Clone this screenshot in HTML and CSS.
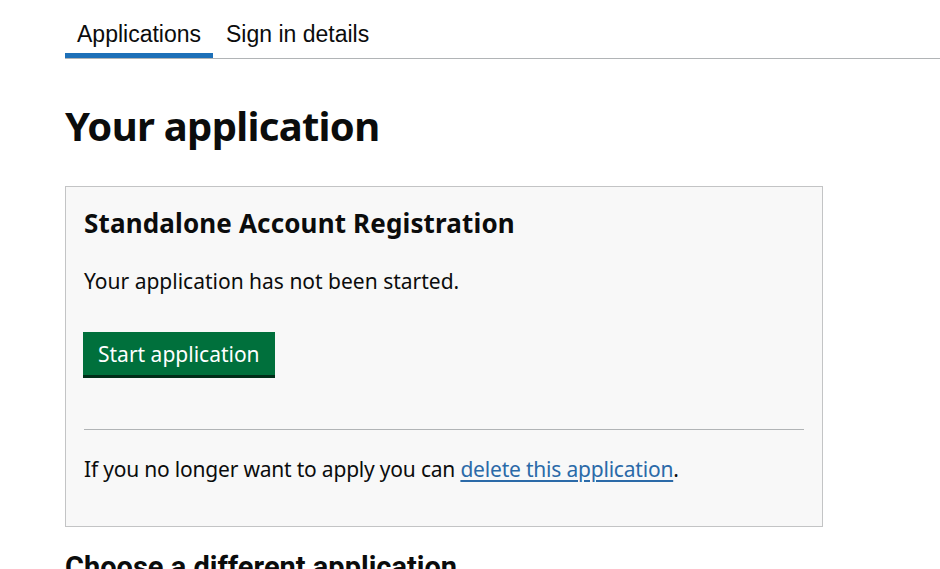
FILE: index.html
```html
<!DOCTYPE html>
<html lang="en">
<head>
  <meta charset="UTF-8">
  <title>Your application</title>
  <link rel="stylesheet" href="styles.css">
</head>
<body>
  <div class="page">
    <ul class="tabs">
      <li class="tab active"><a href="#">Applications</a></li>
      <li class="tab"><a href="#">Sign in details</a></li>
    </ul>

    <h1 class="title">Your application</h1>

    <div class="panel">
      <h2 class="panel-title">Standalone Account Registration</h2>
      <p class="body">Your application has not been started.</p>
      <a href="#" class="button">Start application</a>
      <hr class="rule">
      <p class="body small">If you no longer want to apply you can <a href="#" class="link">delete this application</a>.</p>
    </div>

    <h2 class="section-title">Choose a different application</h2>
  </div>
</body>
</html>
```

FILE: styles.css
```css
* {
  margin: 0;
  padding: 0;
  box-sizing: border-box;
}

body {
  background: #fff;
  color: #0b0c0c;
  font-family: "Noto Sans", "Open Sans", sans-serif;
  overflow: hidden;
}

.page {
  padding-left: 65px;
}

.tabs {
  list-style: none;
  display: flex;
  padding-top: 20px;
  border-bottom: 1px solid #b1b4b6;
}

.tab a {
  display: block;
  padding: 0 12px 4px 12px;
  font-family: "Liberation Sans", Arial, sans-serif;
  font-size: 23px;
  line-height: 29px;
  color: #0b0c0c;
  text-decoration: none;
  border-bottom: 5px solid transparent;
}

.tab.active a {
  border-bottom-color: #1d70b8;
}

.tab + .tab a {
  padding-left: 13px;
}

.title {
  font-size: 40px;
  font-weight: 700;
  line-height: 46px;
  margin-top: 44px;
  letter-spacing: -0.7px;
}

.panel {
  width: 758px;
  margin-top: 37px;
  padding: 20px 18px 43px 18px;
  background: #f8f8f8;
  border: 1px solid #c3c4c5;
}

.panel-title {
  font-size: 26px;
  font-weight: 700;
  line-height: 32px;
  letter-spacing: 0.15px;
}

.body {
  font-size: 21px;
  line-height: 28px;
  margin-top: 28px;
}

.button {
  display: inline-block;
  margin-top: 37px;
  margin-left: -1px;
  padding: 8px 15px 7px 15px;
  background: #00703c;
  color: #fff;
  font-size: 21px;
  line-height: 28px;
  text-decoration: none;
  box-shadow: 0 3px 0 #002d18;
}

.rule {
  border: 0;
  border-top: 1px solid #b1b4b6;
  margin-top: 54px;
}

.small {
  margin-top: 25px;
  letter-spacing: -0.2px;
}

.link {
  color: #2b6aa8;
  text-decoration: underline;
  text-underline-offset: 3px;
}

.section-title {
  font-family: "Roboto", "Noto Sans", sans-serif;
  font-size: 29px;
  font-weight: 700;
  line-height: 32px;
  margin-top: 24px;
}
```
